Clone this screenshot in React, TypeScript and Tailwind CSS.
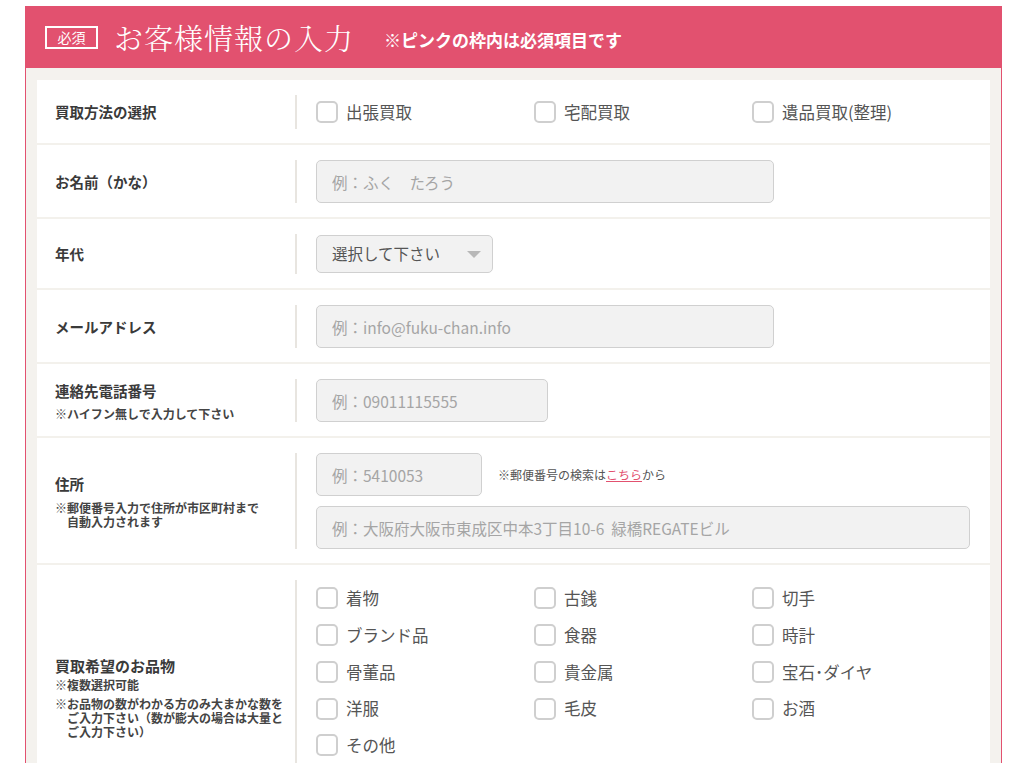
import React from 'react';

const jp = { fontFamily: '"Noto Sans CJK JP", "Noto Sans", sans-serif' };

function Check({ label }: { label: string }) {
  return (
    <label className="flex items-center gap-[8px] text-[16.5px] text-[#555]">
      <span className="w-[22px] h-[22px] rounded-[5px] border-2 border-[#cfcfcf] bg-white shrink-0" />
      <span>{label}</span>
    </label>
  );
}

function Field({ placeholder, w }: { placeholder: string; w: string }) {
  return (
    <input
      readOnly
      placeholder={placeholder}
      className={`${w} h-[43px] rounded-[5px] border border-[#d0d0d0] bg-[#f2f2f2] px-[15px] text-[15.5px] text-[#555] placeholder:text-[#a5a5a5] outline-none`}
      style={jp}
    />
  );
}

function Row({ label, children, last = false }: { label: React.ReactNode; children: React.ReactNode; last?: boolean }) {
  return (
    <div className={`flex pt-[15px] pb-[14px] ${last ? '' : 'border-b-2 border-[#f3f1ec]'}`}>
      <div className="w-[260px] shrink-0 flex items-center pl-[18px] border-r-2 border-[#e8e5e0]">{label}</div>
      <div className="flex-1 pl-[19px] flex items-center">{children}</div>
    </div>
  );
}

// note with hanging indent, each line its own block
function Note({ lines, className = '' }: { lines: string[]; className?: string }) {
  return (
    <div className={`flex flex-col text-[12px] font-bold text-[#444] leading-[14px] ${className}`}>
      {lines.map((l, i) => (
        <span key={i} className={i > 0 ? 'pl-[12px]' : ''}>
          {l}
        </span>
      ))}
    </div>
  );
}

const items = [
  ['着物', '古銭', '切手'],
  ['ブランド品', '食器', '時計'],
  ['骨董品', '貴金属', '宝石･ダイヤ'],
  ['洋服', '毛皮', 'お酒'],
  ['その他'],
];

const title = 'text-[14.5px] font-bold text-[#3a3a3a] leading-[20px]';

export default function App() {
  return (
    <div className="min-h-screen bg-white pt-[6px]" style={jp}>
      <div className="ml-[25px] w-[977px] border-x border-[#e2516f]">
        <header className="h-[62px] bg-[#e2516f] flex items-center pl-[19px] text-white">
          <span className="w-[53px] h-[23px] border-2 border-white flex items-center justify-center text-[14px] leading-none">必須</span>
          <h1
            className="ml-[16px] text-[29px] tracking-[1px] font-light leading-none"
            style={{ fontFamily: '"Noto Serif CJK JP", "Liberation Serif", "Noto Sans CJK JP", serif' }}
          >
            お客様情報の入力
          </h1>
          <p className="ml-[30px] text-[17px] font-bold leading-none mt-[4px]">※ピンクの枠内は必須項目です</p>
        </header>

        <div className="bg-[#f4f2ee] px-[11px] pt-[12px] pb-[12px]">
          <div className="bg-white">
            <Row label={<span className={title}>買取方法の選択</span>}>
              <div className="grid grid-cols-[218px_218px_auto] h-[34px] items-center">
                <Check label="出張買取" />
                <Check label="宅配買取" />
                <Check label="遺品買取(整理)" />
              </div>
            </Row>

            <Row label={<span className={title}>お名前（かな）</span>}>
              <Field placeholder="例：ふく　たろう" w="w-[458px]" />
            </Row>

            <Row label={<span className={title}>年代</span>}>
              <div className="h-[40px] flex items-center">
                <div className="w-[177px] h-[38px] rounded-[5px] border border-[#d0d0d0] bg-[#f2f2f2] flex items-center justify-between pl-[15px] pr-[11px] text-[15.5px] text-[#555]">
                  <span>選択して下さい</span>
                  <span className="w-0 h-0 border-x-[7px] border-x-transparent border-t-[7px] border-t-[#b8b8b8]" />
                </div>
              </div>
            </Row>

            <Row label={<span className={title}>メールアドレス</span>}>
              <Field placeholder="例：info@fuku-chan.info" w="w-[458px]" />
            </Row>

            <Row
              label={
                <div className="flex flex-col">
                  <span className={title}>連絡先電話番号</span>
                  <Note className="mt-[6px]" lines={['※ハイフン無しで入力して下さい']} />
                </div>
              }
            >
              <Field placeholder="例：09011115555" w="w-[232px]" />
            </Row>

            <Row
              label={
                <div className="flex flex-col">
                  <span className={title}>住所</span>
                  <Note className="mt-[7px]" lines={['※郵便番号入力で住所が市区町村まで', '自動入力されます']} />
                </div>
              }
            >
              <div className="flex flex-col gap-[10px]">
                <div className="flex items-center gap-[16px]">
                  <Field placeholder="例：5410053" w="w-[166px]" />
                  <span className="text-[12px] text-[#555]">
                    ※郵便番号の検索は<span className="text-[#e2516f] underline">こちら</span>から
                  </span>
                </div>
                <Field placeholder={'例：大阪府大阪市東成区中本3丁目10-6\u00a0\u00a0緑橋REGATEビル'} w="w-[654px]" />
              </div>
            </Row>

            <Row
              last
              label={
                <div className="flex flex-col">
                  <span className="text-[15px] font-bold text-[#3a3a3a] leading-[20px]">買取希望のお品物</span>
                  <Note className="mt-[2px]" lines={['※複数選択可能']} />
                  <Note
                    className="mt-[5px]"
                    lines={['※お品物の数がわかる方のみ大まかな数を', 'ご入力下さい（数が膨大の場合は大量と', 'ご入力下さい）']}
                  />
                </div>
              }
            >
              <div className="flex flex-col pb-[51px]">
                {items.map((r, i) => (
                  <div key={i} className="grid grid-cols-[218px_218px_auto] h-[36.75px] items-center">
                    {r.map((t) => (
                      <Check key={t} label={t} />
                    ))}
                  </div>
                ))}
              </div>
            </Row>
          </div>
        </div>
      </div>
    </div>
  );
}
